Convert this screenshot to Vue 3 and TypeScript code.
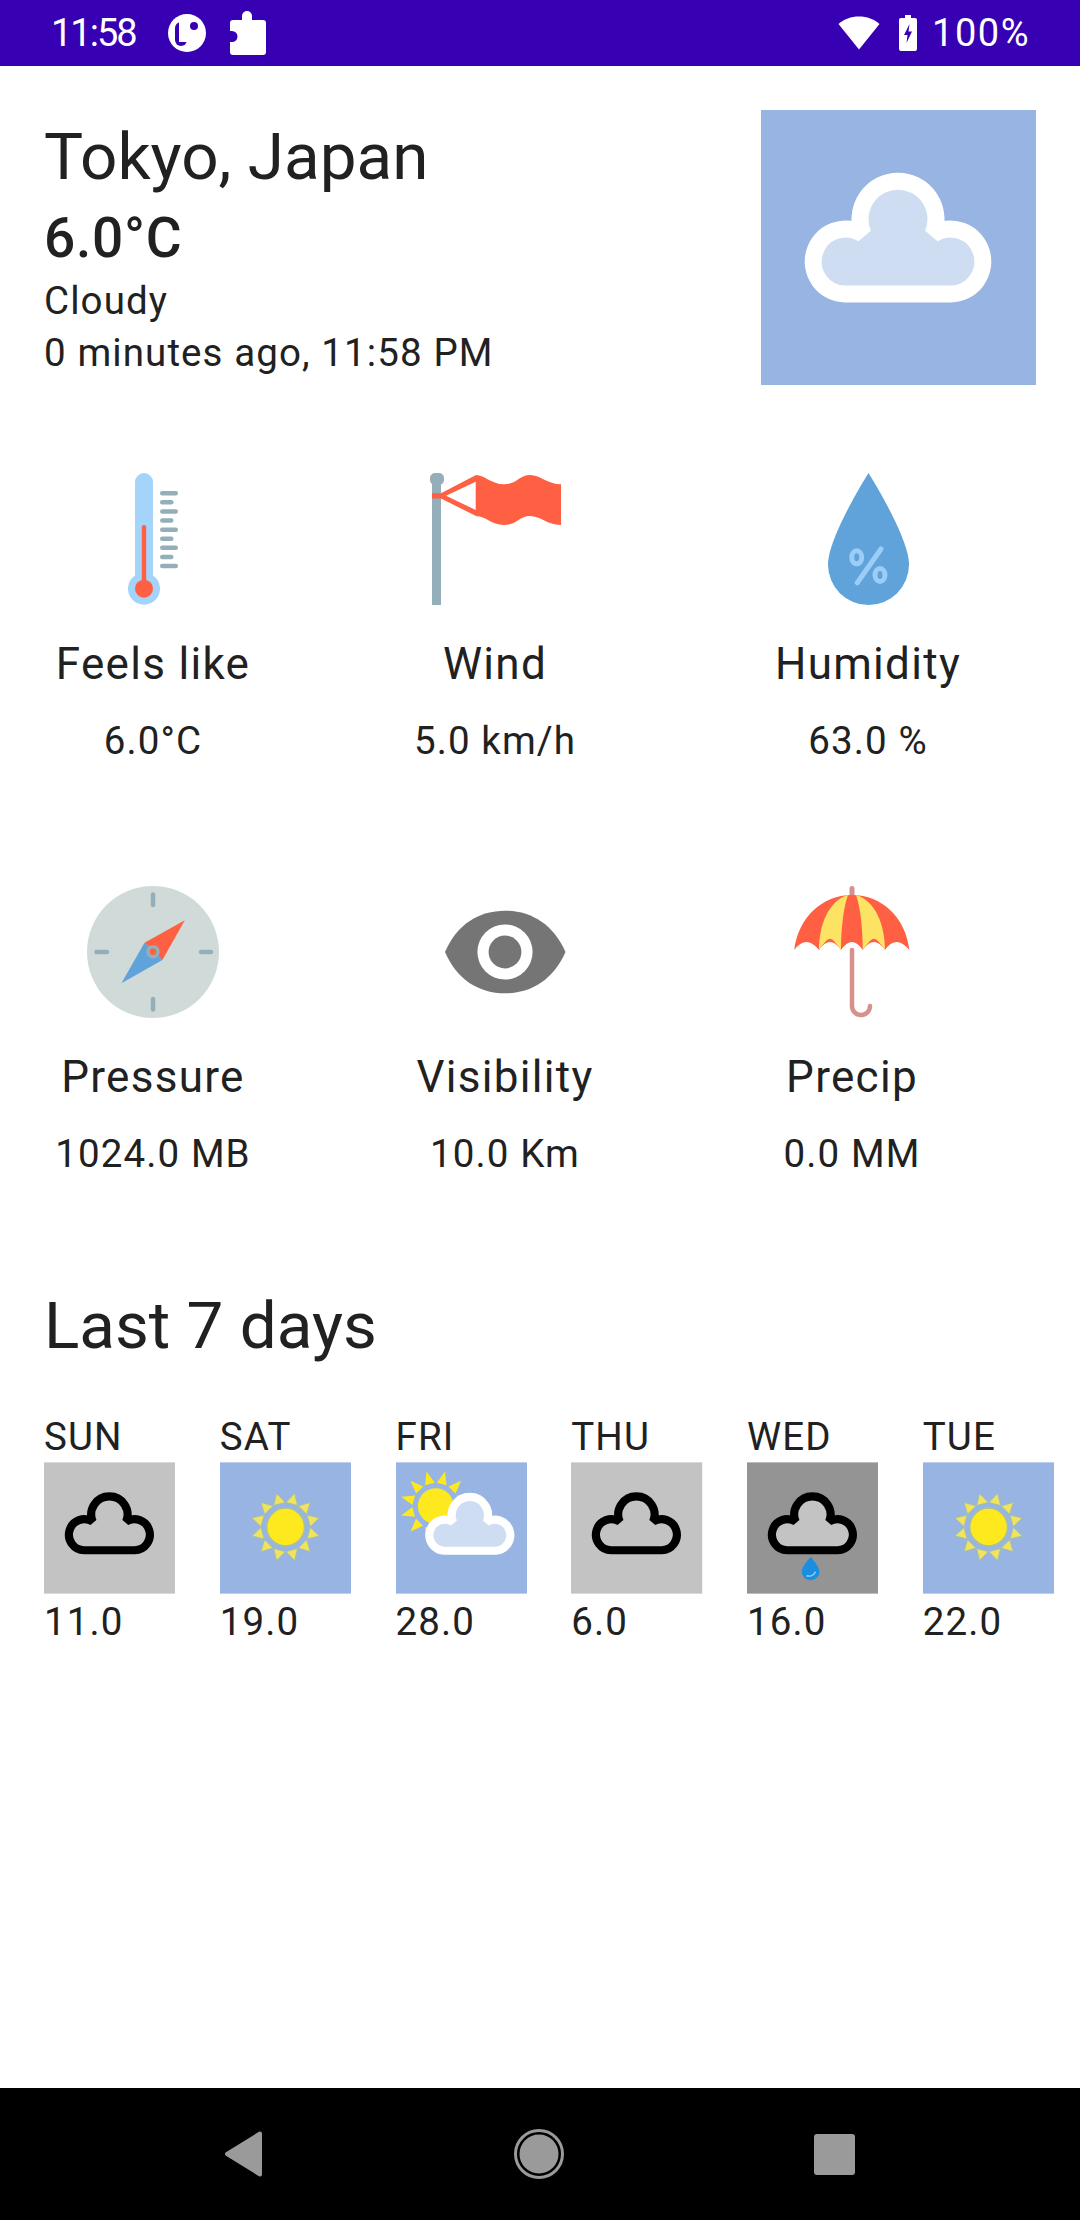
<template>
  <div class="screen">
    <div class="status-bar">
      <span class="clock">11:58</span>
      <svg class="st-logo" width="38" height="38" viewBox="0 0 38 38">
        <circle cx="19" cy="19" r="19" fill="#fff" />
        <rect x="7" y="8" width="12" height="24" rx="6" fill="#3700b3" />
        <rect x="11" y="8" width="11" height="20" fill="#fff" />
        <circle cx="26" cy="12" r="4" fill="#3700b3" />
      </svg>
      <svg class="st-puzzle" width="38" height="44" viewBox="0 0 38 44">
        <path d="M13 9V5a5 5 0 0 1 10 0v4h11a3 3 0 0 1 3 3v29a3 3 0 0 1-3 3H4a3 3 0 0 1-3-3V31h2a5.500 5.500 0 0 0 0-11H1v-8a3 3 0 0 1 3-3Z" fill="#fff" />
      </svg>
      <div class="spacer"></div>
      <svg class="st-wifi" width="42" height="34" viewBox="0 0 42 34">
        <path d="M21 33.500 0.500 8C6 3 13 0.500 21 0.500S36 3 41.500 8Z" fill="#fff" />
      </svg>
      <svg class="st-battery" width="18" height="36" viewBox="0 0 18 36">
        <path d="M6 0h6v3h4a2 2 0 0 1 2 2v29a2 2 0 0 1-2 2H2a2 2 0 0 1-2-2V5a2 2 0 0 1 2-2h4Z" fill="#fff" />
        <path d="M10.500 9 5 20h3.500l-1 8L13 16.500H9.500Z" fill="#3700b3" />
      </svg>
      <span class="percent">100%</span>
    </div>

    <div class="content">
      <div class="current">
        <div class="current-text">
          <h1 class="city">Tokyo, Japan</h1>
          <p class="temp">6.0°C</p>
          <p class="small condition">Cloudy</p>
          <p class="small updated">0 minutes ago, 11:58 PM</p>
        </div>
        <svg class="current-img" viewBox="0 0 275 275">
          <rect width="275" height="275" fill="#97b4e3" />
          <path class="soft" :d="cloudPath" fill="#cfddf3" stroke="#fff" stroke-width="17" stroke-miterlimit="3" />
        </svg>
      </div>

      <div class="stats row-a">
        <div class="stat">
          <svg class="stat-icon" viewBox="0 0 132 132">
            <path d="M48 9a9 9 0 0 1 18 0v93.500a16 16 0 1 1-18 0Z" fill="#a4d4f9" />
            <rect x="54.800" y="52" width="4.400" height="60" rx="2.200" fill="#ff5f42" />
            <circle cx="57" cy="115.700" r="9" fill="#ff5f42" />
            <rect v-for="n in 9" :key="n" x="73" :y="18 + (n - 1) * 9.100" :width="n % 2 ? 18 : 13.500" height="4.500" rx="2.250" fill="#94aeba" />
          </svg>
          <div class="stat-label">Feels like</div>
          <div class="small stat-value">6.0°C</div>
        </div>
        <div class="stat">
          <svg class="stat-icon" viewBox="0 0 132 132">
            <rect x="3" y="8" width="9" height="124" fill="#94aeba" />
            <rect x="1" y="0" width="14" height="12" rx="5" fill="#94aeba" />
            <path fill-rule="evenodd" fill="#ff5f42" d="M47 2C56 2 62 11.300 75 11.300S90 2 101 2 118 11.300 132 11.300V52C118 52 112 43 101 43S88 52 75 52 57 43 47 43L12 25.500H3V20.300H12ZM46.700 8.700 17 22.700 46.700 37Z" />
          </svg>
          <div class="stat-label">Wind</div>
          <div class="small stat-value">5.0 km/h</div>
        </div>
        <div class="stat">
          <svg class="stat-icon" viewBox="0 0 132 132">
            <path d="M66.500 0C66.500 0 26 64 26 91.500a40.500 40.500 0 0 0 81 0C107 64 66.500 0 66.500 0Z" fill="#5fa3da" />
            <g fill="none" stroke="#9ccdf6" stroke-width="5">
              <ellipse cx="54.700" cy="84.300" rx="5" ry="6.500" />
              <ellipse cx="78" cy="102" rx="5" ry="6.500" />
              <path d="M79 76 55.300 109.700" stroke-linecap="round" />
            </g>
          </svg>
          <div class="stat-label">Humidity</div>
          <div class="small stat-value">63.0 %</div>
        </div>
      </div>

      <div class="stats row-b">
        <div class="stat">
          <svg class="stat-icon" viewBox="0 0 132 132">
            <circle cx="66" cy="66" r="66" fill="#d0dbd9" />
            <g stroke="#94aeba" stroke-width="4.500" stroke-linecap="round">
              <path d="M66 8.500V19" />
              <path d="M66 113V123.500" />
              <path d="M9.500 66H20" />
              <path d="M114 66H124" />
            </g>
            <path d="M97.800 34.300 57.500 56.700 75.400 74Z" fill="#ff5f42" />
            <path d="M34.400 97.300 57.500 56.700 75.400 74Z" fill="#5fa3da" />
            <circle cx="66" cy="65.700" r="5" fill="#ff5f42" stroke="#94aeba" stroke-width="3.500" />
          </svg>
          <div class="stat-label">Pressure</div>
          <div class="small stat-value">1024.0 MB</div>
        </div>
        <div class="stat">
          <svg class="stat-icon" viewBox="0 0 132 132">
            <path d="M6 66C18 38 40 24.700 66 24.700S114 38 126.500 66C114 94 92 107.300 66 107.300S18 94 6 66Z" fill="#757575" />
            <circle cx="66" cy="66" r="27.600" fill="#fff" />
            <circle cx="66" cy="66" r="16.400" fill="#757575" />
          </svg>
          <div class="stat-label">Visibility</div>
          <div class="small stat-value">10.0 Km</div>
        </div>
        <div class="stat">
          <svg class="stat-icon" viewBox="0 0 132 132">
            <path d="M66 64V120A9 9 0 0 0 84 120" fill="none" stroke="#d5928a" stroke-width="4.500" stroke-linecap="round" />
            <path d="M66 2.500V12" stroke="#d5928a" stroke-width="5" stroke-linecap="round" />
            <path d="M8.300 64C12 32 36 9 66 9S120 32 123.300 64Q110 48 99 64 88 48 76.700 64 66 48 55 64 44 48 33 64 20 48 8.300 64Z" fill="#ff5f42" />
            <path d="M62 9C42 15 33 40 33 64 44 49 44 49 55 64 55 40 58 20 62 9Z" fill="#fde364" />
            <path d="M70 9C90 15 99 40 99 64 88 49 88 49 76.700 64 76.700 40 74 20 70 9Z" fill="#fde364" />
          </svg>
          <div class="stat-label">Precip</div>
          <div class="small stat-value">0.0 MM</div>
        </div>
      </div>

      <h2 class="week-title">Last 7 days</h2>
      <div class="week">
        <div v-for="d in days" :key="d.name" class="day">
          <div class="small day-name">{{ d.name }}</div>
          <svg class="day-img" viewBox="0 0 132 132">
            <rect width="132" height="132" :fill="backgrounds[d.kind]" />
            <template v-if="d.kind === 'sunny'">
              <g class="soft">
                <polygon v-for="(r, i) in rays(66, 65, 24, 35, 6)" :key="i" :points="r" fill="#f0e45e" stroke="#a9c0a0" stroke-width="1" stroke-linejoin="round" />
                <circle cx="66" cy="65" r="19" fill="#fde91d" stroke="#a9c0a0" stroke-width="1.500" />
              </g>
            </template>
            <template v-if="d.kind === 'partly'">
              <polygon v-for="(r, i) in rays(40, 44, 23, 36, 5)" :key="i" :points="r" fill="#fde91d" />
              <circle cx="40" cy="44" r="18" fill="#fde91d" />
              <path :d="cloudPath" transform="translate(8.500 0.500) scale(0.48)" fill="#cfddf3" stroke="#fff" stroke-width="17" stroke-miterlimit="3" />
            </template>
            <template v-if="d.kind === 'cloudy'">
              <path :d="cloudPath" transform="scale(0.48)" fill="none" stroke="#000" stroke-width="17" stroke-miterlimit="3" />
            </template>
            <template v-if="d.kind === 'rain'">
              <path :d="cloudPath" transform="scale(0.48)" fill="#c3c3c3" stroke="#000" stroke-width="17" stroke-miterlimit="3" />
              <path d="M64 95C64 95 55 105 55 110a9 8.500 0 0 0 18 0C73 105 64 95 64 95Z" fill="#1a8fe0" />
              <path d="M60 114c3 1 7 0 9-4" fill="none" stroke="#9bd6f8" stroke-width="1.500" />
            </template>
          </svg>
          <div class="small day-temp">{{ d.temp }}</div>
        </div>
      </div>
    </div>

    <div class="nav-bar">
      <svg width="38" height="46" viewBox="0 0 38 46">
        <path d="M35 2.500 2 23 35 43.500Z" fill="#9a9a9a" stroke="#9a9a9a" stroke-width="4" stroke-linejoin="round" />
      </svg>
      <svg width="50" height="50" viewBox="0 0 50 50">
        <circle cx="25" cy="25" r="23.500" fill="none" stroke="#9a9a9a" stroke-width="3" />
        <circle cx="25" cy="25" r="19.500" fill="#9a9a9a" />
      </svg>
      <div class="nav-square"></div>
    </div>
  </div>
</template>

<script setup lang="ts">
type Kind = 'sunny' | 'partly' | 'cloudy' | 'rain'

const cloudPath = 'M84 184A32.500 32.500 0 1 1 102 124A38 38 0 1 1 172 124A32.500 32.500 0 1 1 190 184Z'

const backgrounds: Record<Kind, string> = {
  sunny: '#97b4e3',
  partly: '#97b4e3',
  cloudy: '#c3c3c3',
  rain: '#949494',
}

const days: { name: string; temp: string; kind: Kind }[] = [
  { name: 'SUN', temp: '11.0', kind: 'cloudy' },
  { name: 'SAT', temp: '19.0', kind: 'sunny' },
  { name: 'FRI', temp: '28.0', kind: 'partly' },
  { name: 'THU', temp: '6.0', kind: 'cloudy' },
  { name: 'WED', temp: '16.0', kind: 'rain' },
  { name: 'TUE', temp: '22.0', kind: 'sunny' },
]

// 12 wedge shaped sun rays round a centre
function rays(cx: number, cy: number, inner: number, outer: number, half: number) {
  const out: string[] = []
  for (let i = 0; i < 12; i++) {
    const a = ((15 + i * 30) * Math.PI) / 180
    const ux = Math.cos(a)
    const uy = Math.sin(a)
    const p1 = `${cx + ux * inner - uy * half},${cy + uy * inner + ux * half}`
    const p2 = `${cx + ux * inner + uy * half},${cy + uy * inner - ux * half}`
    const p3 = `${cx + ux * outer},${cy + uy * outer}`
    out.push(`${p1} ${p2} ${p3}`)
  }
  return out
}
</script>

<style>
html, body {
  margin: 0;
  background: #fff;
}
</style>

<style scoped>
.screen {
  width: 1080px;
  height: 2220px;
  display: flex;
  flex-direction: column;
  overflow: hidden;
  font-family: Roboto, "Liberation Sans", sans-serif;
  color: #212121;
}

.status-bar {
  height: 66px;
  background: #3700b3;
  color: #fff;
  display: flex;
  align-items: center;
  padding: 0 50px 0 51px;
  font-size: 38px;
}

.clock { letter-spacing: -2px; }
.spacer { flex: 1; }
.st-logo { margin-left: 32px; }
.st-puzzle { margin-left: 23px; }
.st-battery { margin-left: 19px; }
.percent { margin-left: 15px; letter-spacing: 1.500px; }

.content {
  flex: 1;
  padding: 44px 0 0 0;
}

.current {
  display: flex;
  justify-content: space-between;
  padding: 0 44px 0 44px;
}

.current-img {
  width: 275px;
  height: 275px;
  display: block;
}

.soft { filter: blur(0.7px); }

.city {
  margin: 10px 0 0;
  font-size: 65.600px;
  font-weight: 400;
  line-height: 74px;
}

.temp {
  margin: 13px 0 0;
  font-size: 55px;
  font-weight: 500;
  line-height: 62px;
  letter-spacing: 0.700px;
}

.small {
  font-size: 38.500px;
  line-height: 43px;
  letter-spacing: 1.100px;
}

.condition { margin: 10px 0 0; }
.updated { margin: 9px 0 0; }

.stats {
  display: grid;
  text-align: center;
}

.row-a {
  grid-template-columns: 306px 378px 368px;
  margin-top: 88px;
}

.row-b {
  grid-template-columns: 306px 398px 296px;
  margin-top: 124px;
}

.stat {
  display: flex;
  flex-direction: column;
  align-items: center;
}

.stat-icon {
  width: 132px;
  height: 132px;
  display: block;
}

.stat-label {
  margin-top: 35px;
  font-size: 44px;
  line-height: 49px;
  letter-spacing: 1.300px;
}

.stat-value { margin-top: 30px; }

.week-title {
  margin: 114px 0 0 44px;
  font-size: 65.600px;
  font-weight: 400;
  line-height: 74px;
}

.week {
  display: flex;
  gap: 44.500px;
  margin: 52px 0 0 44px;
}

.day { width: 131.250px; }

.day-name { height: 47px; }

.day-img {
  width: 131.250px;
  height: 132px;
  display: block;
}

.day-temp { margin-top: 6px; }

.nav-bar {
  height: 132px;
  flex-shrink: 0;
  background: #000;
  display: flex;
  align-items: center;
  justify-content: space-between;
  padding: 0 225px;
}

.nav-square {
  width: 41px;
  height: 41px;
  border-radius: 3px;
  background: #9a9a9a;
}
</style>
